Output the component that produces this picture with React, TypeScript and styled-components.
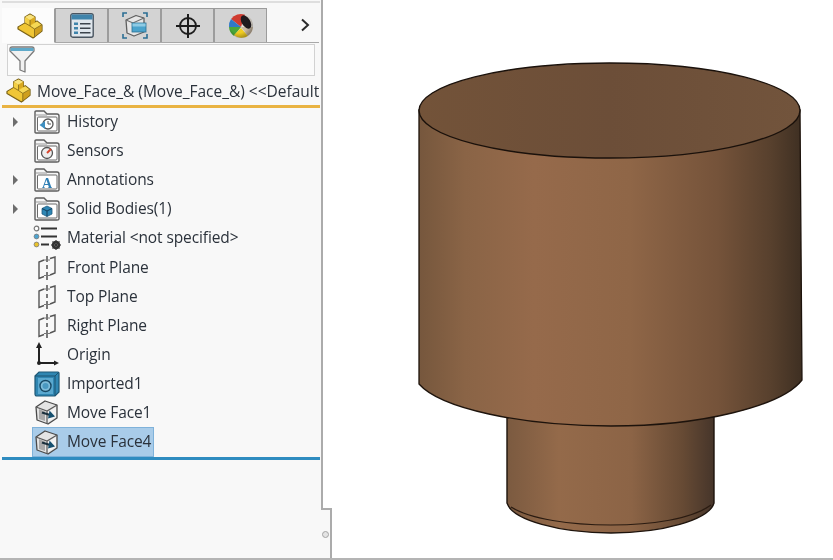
import React from "react";
import styled, { createGlobalStyle } from "styled-components";

const GlobalStyle = createGlobalStyle`
  html, body { margin: 0; padding: 0; background: #fff; }
  body { font-family: "Open Sans", "Noto Sans", sans-serif; }
`;

const Page = styled.div`
  display: flex;
  width: 833px;
  height: 560px;
  overflow: hidden;
  box-sizing: border-box;
  border-bottom: 2px solid #b4b4b4;
  background: #fff;
  filter: blur(0.35px);
`;

const Panel = styled.aside`
  position: relative;
  flex: none;
  width: 323px;
  box-sizing: border-box;
  padding: 1px 0 0 2px;
  background: #f8f8f8;
  border-right: 2px solid #ababab;
  display: flex;
  flex-direction: column;
`;

const TopRule = styled.div`
  height: 2px;
  margin-right: 1px;
  background: #dedede;
`;

const TabBar = styled.div`
  display: flex;
  align-items: stretch;
  height: 34px;
  margin-top: 5px;
  margin-right: 2px;
  border-bottom: 1px solid #a8a8a8;
`;

const Tab = styled.div<{ $active?: boolean }>`
  width: 53px;
  box-sizing: border-box;
  display: flex;
  align-items: center;
  justify-content: center;
  padding-left: ${(p) => (p.$active ? "4px" : "0")};
  background: ${(p) => (p.$active ? "#fcfcfc" : "#d3d3d3")};
  border: 1px solid #9c9c9c;
  border-bottom: ${(p) => (p.$active ? "1px solid #fcfcfc" : "none")};
  border-left-width: ${(p) => (p.$active ? 0 : 1)}px;
  border-top-color: ${(p) => (p.$active ? "#fcfcfc" : "#9c9c9c")};
  margin-bottom: ${(p) => (p.$active ? "-1px" : "0")};
`;

const TabSpacer = styled.div`
  flex: 1;
  display: flex;
  align-items: center;
  justify-content: flex-end;
  padding-right: 9px;
`;

const FilterBox = styled.div`
  height: 32px;
  margin: 1px 6px 0 5px;
  box-sizing: border-box;
  border: 1px solid #d2d2d2;
  background: #fbfbfb;
  display: flex;
  align-items: center;
  padding-left: 1px;
`;

const RootRow = styled.div`
  display: flex;
  align-items: center;
  gap: 6px;
  height: 29px;
  padding-left: 4px;
  margin-right: 1px;
  overflow: hidden;

  svg {
    flex: none;
  }
`;

const RootLabel = styled.span`
  font-size: 15.5px;
  line-height: 20px;
  margin-top: 1px;
  color: #2b323b;
  white-space: nowrap;
`;

const OrangeRule = styled.div`
  height: 3px;
  margin-right: 1px;
  background: #e9b342;
`;

const Tree = styled.div`
  display: flex;
  flex-direction: column;
  margin-top: -0.5px;
`;

const TreeRow = styled.div`
  display: flex;
  align-items: center;
  height: 29.1px;
`;

const CaretSlot = styled.div`
  width: 31px;
  flex: none;
  display: flex;
  justify-content: center;
  padding-right: 4px;
  box-sizing: border-box;
`;

const Caret = styled.div`
  width: 0;
  height: 0;
  border-left: 5px solid #6e6e6e;
  border-top: 5px solid transparent;
  border-bottom: 5px solid transparent;
`;

const TreeItem = styled.div<{ $selected?: boolean }>`
  display: flex;
  align-items: center;
  height: 28px;
  gap: 6px;
  padding: 0 2px 0 0;
  box-sizing: border-box;
  background: ${(p) => (p.$selected ? "#a9cce9" : "transparent")};
  outline: ${(p) => (p.$selected ? "1px solid #7fb2da" : "none")};
`;

const IconSlot = styled.div`
  width: 28px;
  height: 26px;
  flex: none;
  display: flex;
  align-items: center;
  justify-content: center;
`;

const ItemLabel = styled.span`
  font-size: 15.5px;
  line-height: 20px;
  margin-top: -2px;
  color: #2b323b;
  white-space: nowrap;
  letter-spacing: -0.1px;
`;

const BlueRule = styled.div`
  height: 3px;
  margin-right: 1px;
  background: #2f8cc0;
`;

const Grip = styled.div`
  position: absolute;
  right: -11px;
  bottom: 0;
  width: 9px;
  height: 48px;
  background: #f8f8f8;
  border-top: 2px solid #ababab;
  border-right: 2px solid #ababab;
  display: flex;
  align-items: center;
  justify-content: center;
`;

const GripDot = styled.div`
  width: 5px;
  height: 5px;
  border-radius: 50%;
  border: 1.5px solid #a4a4a4;
  background: #e4e4e4;
`;

const Viewport = styled.main`
  flex: 1;
  min-width: 0;
`;

const ModelSvg = styled.svg`
  display: block;
  width: 100%;
  height: 100%;
`;

/* ---- icons ---- */

const PartIcon = ({ size = 26 }: { size?: number }) => (
  <svg width={size} height={size} viewBox="0 0 26 26">
    <path d="M1 14 L8 10 V4 L13 1 L18 4 V9 L20 8 L25 12 V18 L16 25 L1 16 Z" fill="#e8bc2c" stroke="#7a6218" strokeWidth="1.2" strokeLinejoin="round" />
    <path d="M8 4 L13 1.5 L18 4 L13 7 Z" fill="#f8e27c" />
    <path d="M13 7 L18 4 V9 L13 12 Z" fill="#d9a920" />
    <path d="M8 4.5 L13 7 V12 L8 10 Z" fill="#f3cf45" />
    <path d="M13 13 L20 8.5 L24.5 12 L17.5 16 Z" fill="#f6d855" />
    <path d="M2 14 L8 10.5 L13 13 L17 16 V24 L2 15.5 Z" fill="#f0c636" />
    <path d="M17.5 16 L24.5 12.5 V18 L17 24 Z" fill="#cf9f1e" />
    <path d="M8 10 L13 13 L17.5 16 V24.5 M13 7 V13 M17.5 16 L24.5 12" fill="none" stroke="#8a6f1c" strokeWidth="0.9" />
  </svg>
);

const ListTabIcon = () => (
  <svg width="24" height="25" viewBox="0 0 24 25">
    <rect x="0.8" y="0.8" width="22.4" height="23.4" rx="2" fill="#dfe6ec" stroke="#4a5560" strokeWidth="1.4" />
    <rect x="1.5" y="1.5" width="21" height="5" fill="#3f84ab" />
    <rect x="4" y="9.5" width="4" height="2.5" fill="#3f84ab" />
    <rect x="4" y="14" width="4" height="2.5" fill="#3f84ab" />
    <rect x="4" y="18.5" width="4" height="2.5" fill="#3f84ab" />
    <path d="M10 10.7 H20.5 M10 15.2 H20.5 M10 19.7 H20.5" stroke="#3c444c" strokeWidth="1.6" />
  </svg>
);

const ConfigTabIcon = () => (
  <svg width="26" height="27" viewBox="0 0 26 27">
    <path d="M1 5 V1 H5 M21 1 H25 V5 M1 22 V26 H5 M21 26 H25 V22" fill="none" stroke="#2c6f94" strokeWidth="1.6" />
    <path d="M4 8 L14 3.5 L22 6 V20 L12 24 L5 21 Z" fill="#e6e6e6" stroke="#5f5f5f" strokeWidth="1.3" strokeLinejoin="round" />
    <path d="M4 8 L11 11 L22 6" fill="none" stroke="#6e6e6e" strokeWidth="1.1" />
    <rect x="10" y="11" width="14" height="9" fill="#4aa3cc" stroke="#2b6f92" strokeWidth="0.8" />
    <rect x="10.5" y="11.5" width="13" height="3" fill="#8fcbe4" />
  </svg>
);

const CrosshairIcon = () => (
  <svg width="26" height="26" viewBox="0 0 26 26">
    <circle cx="13" cy="13" r="8" fill="none" stroke="#1c1c1c" strokeWidth="1.8" />
    <path d="M13 1 V25 M1 13 H25" stroke="#1c1c1c" strokeWidth="2" />
  </svg>
);

const BallIcon = () => (
  <svg width="26" height="26" viewBox="0 0 26 26">
    <defs>
      <radialGradient id="ballShade" cx="0.4" cy="0.4" r="0.65">
        <stop offset="0.6" stopColor="#000" stopOpacity="0" />
        <stop offset="1" stopColor="#000" stopOpacity="0.35" />
      </radialGradient>
    </defs>
    <circle cx="13" cy="13" r="12" fill="#e8e2d8" />
    <path d="M13 14 L3 6 A12 12 0 0 1 17 1.7 Z" fill="#cf3b30" />
    <path d="M13 14 L1 14 A12 12 0 0 1 3 6 Z" fill="#2f78c8" />
    <path d="M13 14 L1 14 A12 12 0 0 0 6 23 Z" fill="#4aa63a" />
    <path d="M13 15 L6 22 A12 12 0 0 0 20 23 Z" fill="#f0cc22" />
    <path d="M13 14 L20 23 A12 12 0 0 0 25 14 Z" fill="#c9b9a4" />
    <ellipse cx="18" cy="9" rx="4.2" ry="7.4" transform="rotate(-32 18 9)" fill="#1f1a1e" />
    <circle cx="13" cy="13" r="12" fill="url(#ballShade)" />
  </svg>
);

const ChevronIcon = () => (
  <svg width="10" height="14" viewBox="0 0 10 14">
    <path d="M2 1.5 L8 7 L2 12.5" fill="none" stroke="#2a2a2a" strokeWidth="2" />
  </svg>
);

const FilterIcon = () => (
  <svg width="26" height="28" viewBox="0 0 26 28">
    <path d="M1 3 Q1 1 3 1 H23 Q25 1 25 3 V5 L16 15 V26 L11 24 V15 L1 5 Z" fill="#f1f1f1" stroke="#7b7b7b" strokeWidth="1.3" strokeLinejoin="round" />
    <path d="M1.5 2 H24.5 V5 H1.5 Z" fill="#5fa9c9" />
  </svg>
);

const Folder = ({ children }: { children: React.ReactNode }) => (
  <svg width="26" height="24" viewBox="0 0 26 24">
    <path d="M1 22 V2 Q1 1 2 1 H10 L13 4 H23 Q25 4 25 6 V22 Q25 23 23 23 H2 Q1 23 1 22 Z" fill="#f6f6f6" stroke="#5e5e5e" strokeWidth="1.4" />
    <path d="M2 5 H13" stroke="#9a9a9a" strokeWidth="1" />
    <rect x="3.5" y="7" width="19.5" height="14" rx="1" fill="#fff" stroke="#6a6a6a" strokeWidth="1" />
    {children}
  </svg>
);

const HistoryIcon = () => (
  <Folder>
    <circle cx="14" cy="14" r="5" fill="#fff" stroke="#555" strokeWidth="1.3" />
    <path d="M5.5 15 L11 11 L11 19 Z" fill="#3f8fc0" />
    <path d="M14 11 V14 H17" fill="none" stroke="#555" strokeWidth="1" />
  </Folder>
);

const SensorIcon = () => (
  <Folder>
    <circle cx="13" cy="14" r="5.5" fill="#eee" stroke="#555" strokeWidth="1.3" />
    <path d="M13 14 L17 10" stroke="#d8452e" strokeWidth="2" />
  </Folder>
);

const AnnotationIcon = () => (
  <Folder>
    <text x="13" y="20" textAnchor="middle" fontFamily="Liberation Serif, serif" fontWeight="700" fontSize="14" fill="#2f7fb5">A</text>
  </Folder>
);

const BodyIcon = () => (
  <Folder>
    <path d="M13 9 L18 11.5 V17 L13 19.5 L8 17 V11.5 Z" fill="#2e86b4" stroke="#1f5c80" strokeWidth="0.8" />
    <path d="M8 11.5 L13 14 L18 11.5 M13 14 V19.5" fill="none" stroke="#123f5c" strokeWidth="1" />
  </Folder>
);

const MaterialIcon = () => (
  <svg width="28" height="26" viewBox="0 0 28 26">
    <circle cx="3.5" cy="3.5" r="2.3" fill="#fff" stroke="#777" strokeWidth="1.2" />
    <circle cx="3.5" cy="11.5" r="2.4" fill="#4da3cf" stroke="#777" strokeWidth="0.8" />
    <circle cx="3.5" cy="19.5" r="2.4" fill="#e8c22c" stroke="#777" strokeWidth="0.8" />
    <path d="M8 3.5 H24 M8 11.5 H24 M8 19.5 H16" stroke="#333" strokeWidth="2" />
    <circle cx="23" cy="20" r="3.2" fill="none" stroke="#333" strokeWidth="2.2" />
    <path d="M23 15 V25 M18 20 H28 M19.5 16.5 L26.5 23.5 M26.5 16.5 L19.5 23.5" stroke="#333" strokeWidth="1.1" />
  </svg>
);

const PlaneIcon = () => (
  <svg width="20" height="24" viewBox="0 0 20 24">
    <path d="M7 4 L2 6 V22.5 L7 20.5 M13 2.5 L18 1 V17 L13 19" fill="none" stroke="#555" strokeWidth="1.4" />
    <path d="M10 0 V6 M10 9 V13 M10 16 V24" stroke="#444" strokeWidth="1.4" />
    <path d="M7 4 H13 M7 19.5 H13" stroke="#777" strokeWidth="1" />
  </svg>
);

const OriginIcon = () => (
  <svg width="26" height="26" viewBox="0 0 26 26">
    <path d="M5 3 V21 H23" fill="none" stroke="#222" strokeWidth="2" />
    <path d="M5 0 L8 6 H2 Z M25 21 L20 18.5 V23.5 Z" fill="#222" />
    <circle cx="5" cy="21" r="2" fill="#222" />
  </svg>
);

const ImportedIcon = () => (
  <svg width="26" height="26" viewBox="0 0 26 26">
    <path d="M1 5 L5 1 H24 Q25 1 25 2 V21 L21 25 H3 Q1 25 1 23 Z" fill="#2f86b2" stroke="#1f5876" strokeWidth="1.2" />
    <path d="M1 5 H21 V25 M21 5 L25 1" fill="none" stroke="#1c5270" strokeWidth="1" />
    <rect x="4" y="7" width="15" height="16" fill="#5aa8cf" />
    <circle cx="11.5" cy="15" r="5.5" fill="#7fbcd9" stroke="#184a66" strokeWidth="1.4" />
    <circle cx="11.5" cy="15" r="3" fill="#4a98c0" />
  </svg>
);

const MoveFaceIcon = () => (
  <svg width="26" height="25" viewBox="0 0 26 25">
    <path d="M2 7 L11 1 L23 5 V18 L14 24 L3 20 Z" fill="#e4e4e4" stroke="#4a4a4a" strokeWidth="1.3" strokeLinejoin="round" />
    <path d="M2 7 L13 11 L23 5 M13 11 V24" fill="none" stroke="#5a5a5a" strokeWidth="1.2" />
    <path d="M5 9 L11 11.5 V21 L5 19 Z" fill="#a9a9a9" />
    <path d="M14 12 L22 7 V17 L14 22 Z" fill="#f2f2f2" />
    <path d="M8 12.5 L16 15" stroke="#1a2f3c" strokeWidth="2.2" />
    <path d="M21 16.5 L15.5 10.5 L14 18.5 Z" fill="#154f6e" />
  </svg>
);

const treeRows = [
  { label: "History", icon: <HistoryIcon />, caret: true },
  { label: "Sensors", icon: <SensorIcon /> },
  { label: "Annotations", icon: <AnnotationIcon />, caret: true },
  { label: "Solid Bodies(1)", icon: <BodyIcon />, caret: true },
  { label: "Material <not specified>", icon: <MaterialIcon /> },
  { label: "Front Plane", icon: <PlaneIcon /> },
  { label: "Top Plane", icon: <PlaneIcon /> },
  { label: "Right Plane", icon: <PlaneIcon /> },
  { label: "Origin", icon: <OriginIcon /> },
  { label: "Imported1", icon: <ImportedIcon /> },
  { label: "Move Face1", icon: <MoveFaceIcon /> },
  { label: "Move Face4", icon: <MoveFaceIcon />, selected: true },
];

// coordinates are page pixels: the viewport starts at x=323 of the page
const Model = () => (
  <ModelSvg viewBox="323 0 510 558" preserveAspectRatio="none">
    <defs>
      <linearGradient id="bigWall" gradientUnits="userSpaceOnUse" x1="419" y1="0" x2="802" y2="0">
        <stop offset="0" stopColor="#76573d" />
        <stop offset="0.12" stopColor="#8a6446" />
        <stop offset="0.3" stopColor="#966a4b" />
        <stop offset="0.55" stopColor="#8f6647" />
        <stop offset="0.78" stopColor="#75533a" />
        <stop offset="0.92" stopColor="#57402d" />
        <stop offset="1" stopColor="#3e2f22" />
      </linearGradient>
      <linearGradient id="smallWall" gradientUnits="userSpaceOnUse" x1="507" y1="0" x2="714" y2="0">
        <stop offset="0" stopColor="#7b5a40" />
        <stop offset="0.25" stopColor="#946a4a" />
        <stop offset="0.6" stopColor="#8c6446" />
        <stop offset="0.85" stopColor="#664a34" />
        <stop offset="1" stopColor="#46352a" />
      </linearGradient>
      <linearGradient id="topFace" gradientUnits="userSpaceOnUse" x1="419" y1="0" x2="800" y2="0">
        <stop offset="0" stopColor="#735339" />
        <stop offset="0.5" stopColor="#6c4e38" />
        <stop offset="1" stopColor="#72543c" />
      </linearGradient>
    </defs>
    <path d="M507 415 V503 C512 520 560 533 611 533 C662 533 709 520 714 503 V415 Z" fill="url(#smallWall)" stroke="#1d130c" strokeWidth="1.4" />
    <path d="M511 507 C530 519 570 525 611 525 C652 525 692 519 711 505" fill="none" stroke="#2a1b11" strokeWidth="1.2" />
    <path d="M419 110 V384 C440 408 520 426 611 426 C702 426 782 406 802 380 L800 110 Z" fill="url(#bigWall)" stroke="#1d130c" strokeWidth="1.3" />
    <ellipse cx="609.5" cy="110.5" rx="190.5" ry="47.5" fill="url(#topFace)" stroke="#1a110b" strokeWidth="1.4" />
  </ModelSvg>
);

export default function App() {
  return (
    <>
      <GlobalStyle />
      <Page>
        <Panel>
          <TopRule />
          <TabBar>
            <Tab $active>
              <PartIcon />
            </Tab>
            <Tab>
              <ListTabIcon />
            </Tab>
            <Tab>
              <ConfigTabIcon />
            </Tab>
            <Tab>
              <CrosshairIcon />
            </Tab>
            <Tab>
              <BallIcon />
            </Tab>
            <TabSpacer>
              <ChevronIcon />
            </TabSpacer>
          </TabBar>
          <FilterBox>
            <FilterIcon />
          </FilterBox>
          <RootRow>
            <PartIcon size={25} />
            <RootLabel>Move_Face_&amp; (Move_Face_&amp;) &lt;&lt;Default</RootLabel>
          </RootRow>
          <OrangeRule />
          <Tree>
            {treeRows.map((row) => (
              <TreeRow key={row.label}>
                <CaretSlot>{row.caret && <Caret />}</CaretSlot>
                <TreeItem $selected={row.selected}>
                  <IconSlot>{row.icon}</IconSlot>
                  <ItemLabel>{row.label}</ItemLabel>
                </TreeItem>
              </TreeRow>
            ))}
          </Tree>
          <BlueRule />
          <Grip>
            <GripDot />
          </Grip>
        </Panel>
        <Viewport>
          <Model />
        </Viewport>
      </Page>
    </>
  );
}
